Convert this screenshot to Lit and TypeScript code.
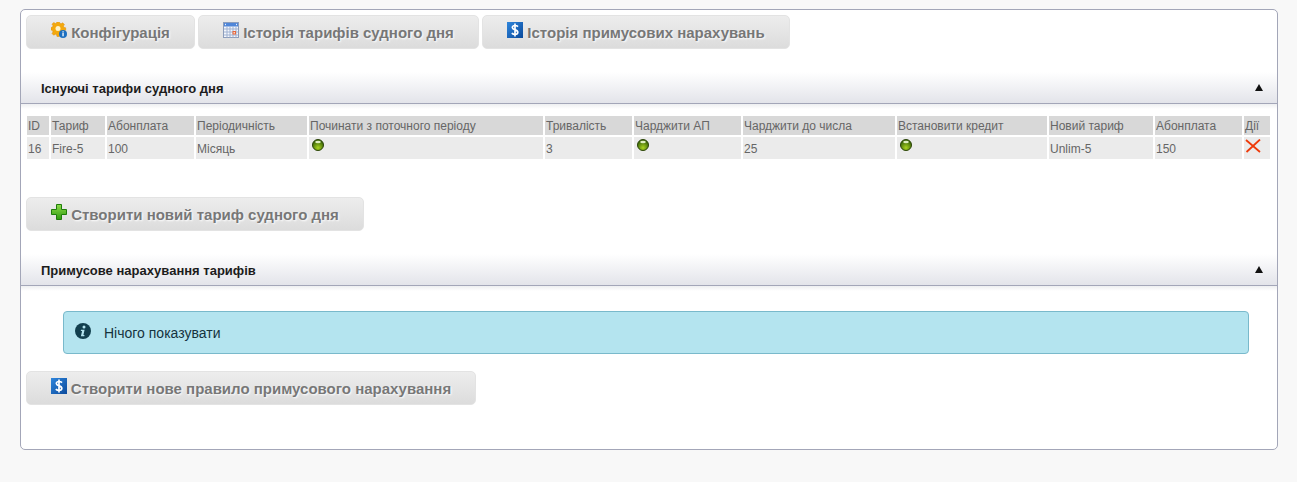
import { LitElement, html, css } from "lit";
import { customElement } from "lit/decorators.js";

const gear = html`<svg class="ic" viewBox="0 0 16 16" width="16" height="16">
  <path d="M6 0h2.400l.4 1.800 1.300.5 1.600-1 1.700 1.700-1 1.600.5 1.300 1.800.4v2.400l-1.800.4-.5 1.300 1 1.600-1.700 1.700-1.600-1-1.300.5-.4 1.800H6l-.4-1.800-1.300-.5-1.600 1-1.700-1.700 1-1.600-.5-1.300L0 8.400V6l1.500-.4.5-1.300-1-1.600L2.700 1l1.600 1 1.300-.5z" fill="#f3a90e" stroke="#e08a05" stroke-width=".5" transform="translate(0 -.5)"/>
  <circle cx="7" cy="6.500" r="2.500" fill="#fff3c8"/>
  <circle cx="12" cy="12" r="4" fill="#1c6fc0"/>
  <rect x="11.400" y="11" width="1.300" height="3.300" fill="#fff"/><rect x="11.400" y="9.300" width="1.300" height="1.200" fill="#fff"/>
</svg>`;

const calendar = html`<svg class="ic" viewBox="0 0 16 16" width="16" height="16">
  <rect x=".5" y=".5" width="15" height="15" fill="#f4f6fb" stroke="#8c9dbb"/>
  <rect x="1" y="1" width="14" height="3.500" fill="#4f86d9"/>
  <path d="M3 1.500v2l-1.200-1zM13 1.500v2l1.200-1z" fill="#fff"/>
  <path d="M1 7h14M1 10h14M1 13h14M4 4.500v11M7 4.500v11M10 4.500v11M13 4.500v11" stroke="#9fb2d2" stroke-width="1"/>
  <rect x="9.500" y="9" width="3.500" height="3.500" fill="#e8663a"/>
  <rect x="10.500" y="10" width="1.500" height="1.500" fill="#f7d7c8"/>
</svg>`;

const dollar = html`<svg class="ic" viewBox="0 0 16 16" width="16" height="16">
  <defs><linearGradient id="dg" x1="0" y1="0" x2="1" y2="1"><stop offset="0" stop-color="#2f86dc"/><stop offset="1" stop-color="#0b4a9c"/></linearGradient></defs>
  <rect width="16" height="16" fill="url(#dg)"/>
  <path d="M11 4.600C10.200 3.800 9.200 3.500 8 3.500 6.300 3.500 5.300 4.300 5.300 5.600 5.300 8.400 10.800 7.400 10.800 10.300 10.800 11.700 9.600 12.500 8 12.500 6.700 12.500 5.600 12 4.800 11.200M8 1.500v13" fill="none" stroke="#fff" stroke-width="1.700"/>
</svg>`;

const plus = html`<svg class="ic" viewBox="0 0 16 16" width="16" height="16">
  <defs><linearGradient id="pg" x1="0" y1="0" x2="0" y2="1"><stop offset="0" stop-color="#8ddc4a"/><stop offset="1" stop-color="#2f9a10"/></linearGradient></defs>
  <path d="M5.500 .5h5v5h5v5h-5v5h-5v-5h-5v-5h5z" fill="url(#pg)" stroke="#1f7d0a"/>
</svg>`;

const dot = html`<svg class="dot" viewBox="0 0 12 12" width="12" height="12">
  <defs><radialGradient id="gd" cx=".5" cy=".75" r=".6"><stop offset="0" stop-color="#a9d41f"/><stop offset="1" stop-color="#3f6a08"/></radialGradient></defs>
  <circle cx="6" cy="6" r="5.500" fill="url(#gd)" stroke="#2a4408" stroke-width="1"/>
  <ellipse cx="6" cy="3" rx="2.800" ry="1.300" fill="#dfeec0"/>
</svg>`;

const cross = html`<svg class="x" viewBox="0 0 16 14" width="16" height="14">
  <path d="M1 1l14 12M15 .5L1.500 13" stroke="#ee3a0a" stroke-width="1.800" fill="none"/>
</svg>`;

const infoIcon = html`<svg viewBox="0 0 16 16" width="16" height="16">
  <circle cx="8" cy="8" r="8" fill="#123f4e"/>
  <circle cx="9" cy="4" r="1.500" fill="#b4e4ef"/>
  <path d="M6 6.800h3.600L8.400 12h1.100l-.2 1.200H5.900L7.100 8H5.800z" fill="#b4e4ef"/>
</svg>`;

const COLS = [22, 54, 87, 111, 234, 87, 107, 152, 150, 104, 87, 26];
const HEAD = ["ID", "Тариф", "Абонплата", "Періодичність", "Починати з поточного періоду", "Тривалість", "Чарджити АП", "Чарджити до числа", "Встановити кредит", "Новий тариф", "Абонплата", "Дії"];
const ROW: unknown[] = ["16", "Fire-5", "100", "Місяць", dot, "3", dot, "25", dot, "Unlim-5", "150", cross];

@customElement("app-root")
export class AppRoot extends LitElement {
  static styles = css`
    :host { display: block; background: #f8f8f8; height: 482px; padding: 9px 19px 0 20px; box-sizing: border-box; font-family: "Liberation Sans", Arial, sans-serif; }
    .panel { height: 441px; box-sizing: border-box; background: #fff; border: 1px solid #a3a6b8; border-radius: 5px; }
    .tabs { display: flex; gap: 3px; padding: 5px 5px 0; }
    .btn { display: inline-flex; align-items: flex-start; justify-content: center; box-sizing: border-box; height: 34px; padding: 6px 24px 0; border: 1px solid #e3e3e3; border-radius: 5px;
      background: linear-gradient(#ededed, #dcdcdc); color: #777; font-weight: bold; font-size: 15px; line-height: 22px; text-shadow: 1px 1px 2px #fff; white-space: nowrap; gap: 4px; }
    .ic { display: block; flex: none; }
    .w1 { width: 169px; } .w2 { width: 281px; } .w3 { width: 308px; } .w4 { width: 338px; } .w5 { width: 450px; }
    .head { display: flex; align-items: center; justify-content: space-between; box-sizing: border-box; height: 32px; padding: 1px 14px 0 20px; background: linear-gradient(#fff, #e3e4ea); border-bottom: 1px solid #a3a6b8; font-size: 13px; font-weight: bold; color: #1c1c1c; }
    .head.first { margin-top: 23px; }
    .arrow { width: 0; height: 0; margin-top: -2px; border-left: 4px solid transparent; border-right: 4px solid transparent; border-bottom: 7px solid #111; }
    .body { padding: 10px 4px 0; background: linear-gradient(#eeeff1, #fff 5px) no-repeat; }
    table { border-collapse: separate; border-spacing: 2px; table-layout: fixed; width: 1247px; font-size: 12px; color: #666; }
    th, td { box-sizing: border-box; padding: 0 1px; }
    th { background: #d8d8d8; font-weight: normal; text-align: left; height: 19px; padding-top: 1px; line-height: 18px; white-space: nowrap; overflow: hidden; }
    td { background: #ebebeb; height: 22px; padding-top: 2px; line-height: 20px; vertical-align: middle; }
    td.g { vertical-align: top; line-height: 0; padding-top: 0; }
    .dot { display: block; margin: 2px 0 0 2px; }
    .x { display: block; margin: 2px 0 0 0; }
    .create1 { padding: 36px 5px 0; }
    .head.second { margin-top: 23px; }
    .after { height: 5px; background: linear-gradient(#eeeff1, #fff); }
    .alert { display: flex; align-items: center; box-sizing: border-box; height: 43px; margin: 20px 28px 0 42px; padding: 0 0 0 11px; gap: 13px; background: #b4e4ef; border: 1px solid #79b9cb; border-radius: 4px; color: #15333e; font-size: 14px; }
    .alert span { margin-top: 1px; }
    .alert svg { display: block; flex: none; margin-top: -3px; }
    .create2 { padding: 17px 5px 0; }
  `;

  render() {
    return html`
      <div class="panel">
        <div class="tabs">
          <div class="btn w1">${gear}<span>Конфігурація</span></div>
          <div class="btn w2">${calendar}<span>Історія тарифів судного дня</span></div>
          <div class="btn w3">${dollar}<span>Історія примусових нарахувань</span></div>
        </div>
        <div class="head first"><span>Існуючі тарифи судного дня</span><i class="arrow"></i></div>
        <div class="body">
          <table>
            <colgroup>${COLS.map((w) => html`<col style="width:${w}px" />`)}</colgroup>
            <thead><tr>${HEAD.map((h) => html`<th>${h}</th>`)}</tr></thead>
            <tbody><tr>${ROW.map((c) => html`<td class=${typeof c === "string" ? "" : "g"}>${c}</td>`)}</tr></tbody>
          </table>
        </div>
        <div class="create1"><div class="btn w4">${plus}<span>Створити новий тариф судного дня</span></div></div>
        <div class="head second"><span>Примусове нарахування тарифів</span><i class="arrow"></i></div>
        <div class="after"></div>
        <div class="alert">${infoIcon}<span>Нічого показувати</span></div>
        <div class="create2"><div class="btn w5">${dollar}<span>Створити нове правило примусового нарахування</span></div></div>
      </div>
    `;
  }
}
